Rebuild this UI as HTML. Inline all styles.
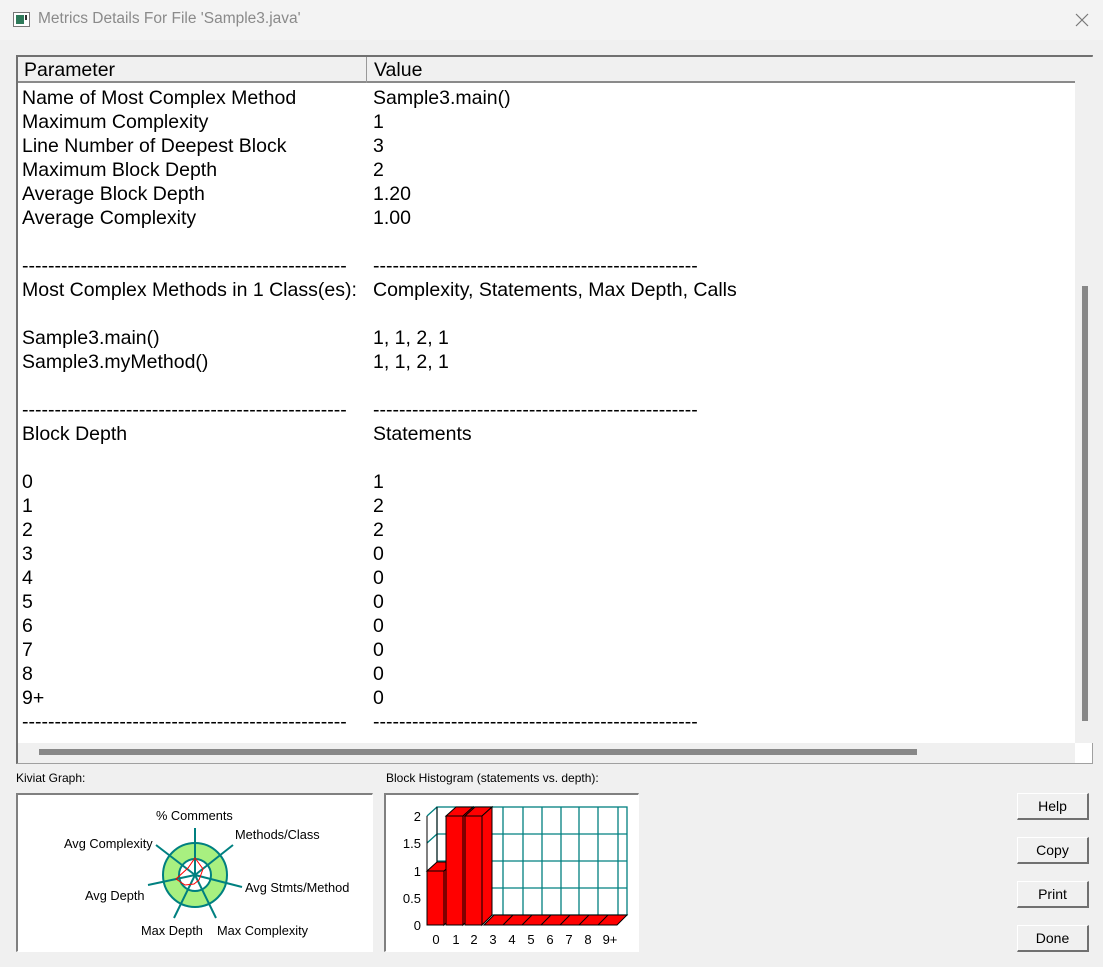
<!DOCTYPE html>
<html><head><meta charset="utf-8"><style>
*{margin:0;padding:0;box-sizing:border-box}
body{width:1103px;height:967px;background:#f0f0f0;font-family:"Liberation Sans",Arial,sans-serif;position:relative;overflow:hidden}
.title{position:absolute;left:0;top:0;width:1103px;height:40px;background:#f3f3f3}
.title span{position:absolute;left:38px;top:10px;font-size:15.5px;color:#8a8a8a}
.list{position:absolute;left:16px;top:55px;width:1077px;height:709px;border:1px solid #a0a0a0;border-top:2px solid #707070;border-left:2px solid #707070;background:#fff}
.hdr{position:absolute;left:0;top:0;width:1057px;height:26px;background:#f0f0f0;border-bottom:2px solid #8a8a8a}
.hdr div{position:absolute;top:2px;font-size:19.5px;color:#000}
.row{position:absolute;left:0;font-size:19.5px;color:#000;white-space:nowrap;line-height:24px}
.c1{position:absolute;left:4px}.c2{position:absolute;left:355px}
.btn{position:absolute;left:1017px;width:72px;height:27px;background:#f0f0f0;border:1px solid #fff;border-right:2px solid #707070;border-bottom:2px solid #707070;font-size:14px;text-align:center;line-height:24px}
.lbl{position:absolute;font-size:12px;color:#000}
.box{position:absolute;top:793px;height:159px;background:#fff;border:2px solid #808080;border-right:1px solid #fff;border-bottom:1px solid #fff}
</style></head><body>
<div class="title">
<svg style="position:absolute;left:13px;top:12px" width="17" height="15"><rect x="0.5" y="0.5" width="16" height="14" fill="#fff" stroke="#777"/><rect x="3" y="3" width="8" height="9" fill="#2e7a5a"/><rect x="12" y="3" width="2" height="5" fill="#333"/></svg>
<span>Metrics Details For File 'Sample3.java'</span>
<svg style="position:absolute;left:1075px;top:13px" width="14" height="14"><path d="M1 1L13 13M13 1L1 13" stroke="#777" stroke-width="1.2"/></svg>
</div>
<div class="list">
<div class="hdr"><div style="left:6px">Parameter</div><div style="left:348px;top:0;height:26px;border-left:1px solid #999"></div><div style="left:356px">Value</div></div>
<div style="position:absolute;left:1057px;top:0;width:18px;height:686px;background:#f0f0f0"></div>
<div style="position:absolute;left:1064px;top:229px;width:6px;height:435px;background:#888"></div>
<div style="position:absolute;left:0;top:686px;width:1057px;height:20px;background:#f0f0f0"></div>
<div style="position:absolute;left:21px;top:692px;width:878px;height:6px;background:#888"></div>
<div class="row" style="top:29px"><span class="c1">Name of Most Complex Method</span><span class="c2">Sample3.main()</span></div>
<div class="row" style="top:53px"><span class="c1">Maximum Complexity</span><span class="c2">1</span></div>
<div class="row" style="top:77px"><span class="c1">Line Number of Deepest Block</span><span class="c2">3</span></div>
<div class="row" style="top:101px"><span class="c1">Maximum Block Depth</span><span class="c2">2</span></div>
<div class="row" style="top:125px"><span class="c1">Average Block Depth</span><span class="c2">1.20</span></div>
<div class="row" style="top:149px"><span class="c1">Average Complexity</span><span class="c2">1.00</span></div>
<div class="row" style="top:197px"><span class="c1">--------------------------------------------------</span><span class="c2">--------------------------------------------------</span></div>
<div class="row" style="top:221px"><span class="c1">Most Complex Methods in 1 Class(es):</span><span class="c2">Complexity, Statements, Max Depth, Calls</span></div>
<div class="row" style="top:269px"><span class="c1">Sample3.main()</span><span class="c2">1, 1, 2, 1</span></div>
<div class="row" style="top:293px"><span class="c1">Sample3.myMethod()</span><span class="c2">1, 1, 2, 1</span></div>
<div class="row" style="top:341px"><span class="c1">--------------------------------------------------</span><span class="c2">--------------------------------------------------</span></div>
<div class="row" style="top:365px"><span class="c1">Block Depth</span><span class="c2">Statements</span></div>
<div class="row" style="top:413px"><span class="c1">0</span><span class="c2">1</span></div>
<div class="row" style="top:437px"><span class="c1">1</span><span class="c2">2</span></div>
<div class="row" style="top:461px"><span class="c1">2</span><span class="c2">2</span></div>
<div class="row" style="top:485px"><span class="c1">3</span><span class="c2">0</span></div>
<div class="row" style="top:509px"><span class="c1">4</span><span class="c2">0</span></div>
<div class="row" style="top:533px"><span class="c1">5</span><span class="c2">0</span></div>
<div class="row" style="top:557px"><span class="c1">6</span><span class="c2">0</span></div>
<div class="row" style="top:581px"><span class="c1">7</span><span class="c2">0</span></div>
<div class="row" style="top:605px"><span class="c1">8</span><span class="c2">0</span></div>
<div class="row" style="top:629px"><span class="c1">9+</span><span class="c2">0</span></div>
<div class="row" style="top:653px"><span class="c1">--------------------------------------------------</span><span class="c2">--------------------------------------------------</span></div>
</div>
<div class="lbl" style="left:16px;top:771px">Kiviat Graph:</div>
<div class="lbl" style="left:386px;top:771px">Block Histogram (statements vs. depth):</div>
<div class="box" style="left:16px;width:357px"></div>
<div class="box" style="left:384px;width:255px"></div>
<svg style="position:absolute;left:0;top:0" width="1103" height="967" font-family="Liberation Sans, Arial, sans-serif" font-size="12.8">
<circle cx="195" cy="875" r="24" fill="none" stroke="#a8f080" stroke-width="16"/>
<circle cx="195" cy="875" r="32" fill="none" stroke="#008080" stroke-width="2"/>
<circle cx="195" cy="875" r="16" fill="none" stroke="#008080" stroke-width="2"/>
<g stroke="#008080" stroke-width="2"><line x1="195" y1="875" x2="195" y2="828"/><line x1="195" y1="875" x2="233" y2="845"/><line x1="195" y1="875" x2="242" y2="887"/><line x1="195" y1="875" x2="216" y2="918"/><line x1="195" y1="875" x2="174" y2="918"/><line x1="195" y1="875" x2="148" y2="885"/><line x1="195" y1="875" x2="156" y2="845"/></g>
<path d="M195 858L203 869L199 880L194 884L185 885L176 879L188 868Z" fill="none" stroke="#f00"/>
<g fill="#000"><text x="156" y="820">% Comments</text><text x="235" y="839">Methods/Class</text><text x="64" y="848">Avg Complexity</text><text x="245" y="892">Avg Stmts/Method</text><text x="85" y="900">Avg Depth</text><text x="141" y="935">Max Depth</text><text x="217" y="935">Max Complexity</text></g>
<g stroke="#008080" stroke-width="1.3" fill="none"><rect x="437" y="807" width="190" height="108"/>
<path d="M437 834H627M437 861H627M437 888H627M503 807V915M523 807V915M542 807V915M561 807V915M579 807V915M598 807V915M618 807V915M427 816L437 807M427 843L437 834"/></g>
<path d="M427 816V925M437 807V915M427 925L437 915" stroke="#000" fill="none"/>
<g stroke="#000" fill="#f00">
<path d="M427 871H444V925H427Z"/><path d="M427 871L437 862H454L444 871Z"/><path d="M444 871L454 862V915L444 925Z"/>
<path d="M446 816H463V925H446Z"/><path d="M446 816L456 807H473L463 816Z"/><path d="M463 816L473 807V915L463 925Z"/>
<path d="M465 816H482V925H465Z"/><path d="M465 816L475 807H492L482 816Z"/><path d="M482 816L492 807V915L482 925Z"/>
<path d="M484 925L494 915H627L617 925Z"/></g>
<g stroke="#000"><path d="M503 925L513 915M522 925L532 915M541 925L551 915M560 925L570 915M579 925L589 915M598 925L608 915"/></g>
<g fill="#000" font-size="13" text-anchor="end"><text x="421" y="821">2</text><text x="421" y="848">1.5</text><text x="421" y="876">1</text><text x="421" y="903">0.5</text><text x="421" y="930">0</text></g>
<g fill="#000" font-size="13" text-anchor="middle"><text x="436" y="944">0</text><text x="456" y="944">1</text><text x="474" y="944">2</text><text x="493" y="944">3</text><text x="512" y="944">4</text><text x="531" y="944">5</text><text x="550" y="944">6</text><text x="569" y="944">7</text><text x="588" y="944">8</text><text x="610" y="944">9+</text></g>
</svg>
<div class="btn" style="top:793px">Help</div>
<div class="btn" style="top:837px">Copy</div>
<div class="btn" style="top:881px">Print</div>
<div class="btn" style="top:925px">Done</div>
</body></html>
